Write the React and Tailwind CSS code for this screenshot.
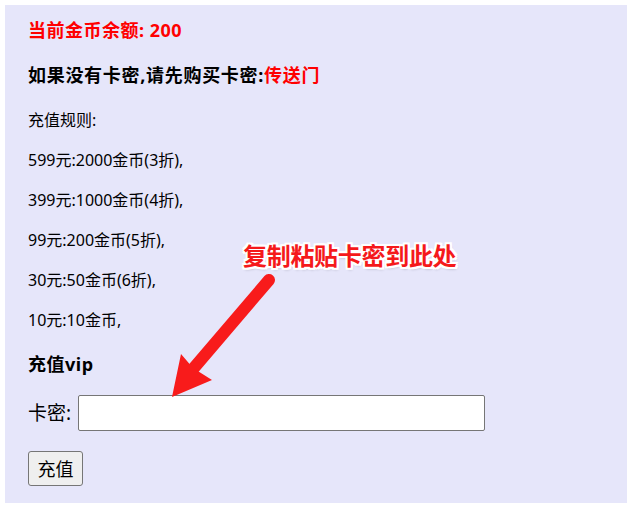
import React, { useState } from 'react';

const rules = [
  '充值规则:',
  '599元:2000金币(3折),',
  '399元:1000金币(4折),',
  '99元:200金币(5折),',
  '30元:50金币(6折),',
  '10元:10金币,',
];

export default function App() {
  const [code, setCode] = useState('');

  return (
    <div className="min-h-[509px] w-[632px] bg-white p-[5px] font-['Noto_Sans','Noto_Sans_CJK_SC',sans-serif] text-black">
      <div className="relative h-[498px] bg-[#e6e6fa] px-[23px] pt-[13px]">
        {/* Balance */}
        <div className="text-[18px] font-bold leading-[24px] tracking-[0.5px] text-[#ff0000]">当前金币余额: 200</div>

        <div className="mt-[21px] text-[18px] font-bold leading-[24px] tracking-[0.7px]">
          如果没有卡密,请先购买卡密:<a href="#" className="text-[#ff0000]">传送门</a>
        </div>

        {/* Rules */}
        <div className="mt-[13px]">
          {rules.map((line) => (
            <div key={line} className="text-[16px] leading-[40px]">
              {line}
            </div>
          ))}
        </div>

        <div className="mt-[12px] text-[18px] font-bold leading-[24px] tracking-[0.5px]">充值vip</div>

        <div className="mt-[19px] flex items-center gap-[7px]">
          <span className="text-[19px] leading-[24px]">卡密:</span>
          <input
            value={code}
            onChange={(e) => setCode(e.target.value)}
            className="h-[36px] w-[407px] rounded-[2px] border border-[#767676] bg-white px-2 text-[16px] outline-none"
          />
        </div>

        <button className="mt-[20px] flex h-[35px] w-[55px] items-center justify-center rounded-[3px] border border-[#767676] bg-[#efefef] text-[18px] leading-none">
          充值
        </button>

        {/* Annotation: hint text + arrow drawn over the page */}
        <div className="absolute left-[238px] top-[237px] text-[24px] font-bold leading-[28px] tracking-[-0.3px] text-[#f5191b] [text-shadow:2px_0_0_#fff,-2px_0_0_#fff,0_2px_0_#fff,0_-2px_0_#fff,2px_2px_0_#fff,-2px_-2px_0_#fff,2px_-2px_0_#fff,-2px_2px_0_#fff,1px_2px_3px_rgba(0,0,0,0.25)]">
          复制粘贴卡密到此处
        </div>
        <svg className="pointer-events-none absolute left-0 top-0" width="622" height="498" viewBox="5 5 622 498">
          <line x1="269" y1="280" x2="193" y2="369" stroke="#f81b1b" strokeWidth="12" strokeLinecap="round" />
          <polygon points="172,397 181,354 193,368 212,380" fill="#f81b1b" />
        </svg>
      </div>
    </div>
  );
}
